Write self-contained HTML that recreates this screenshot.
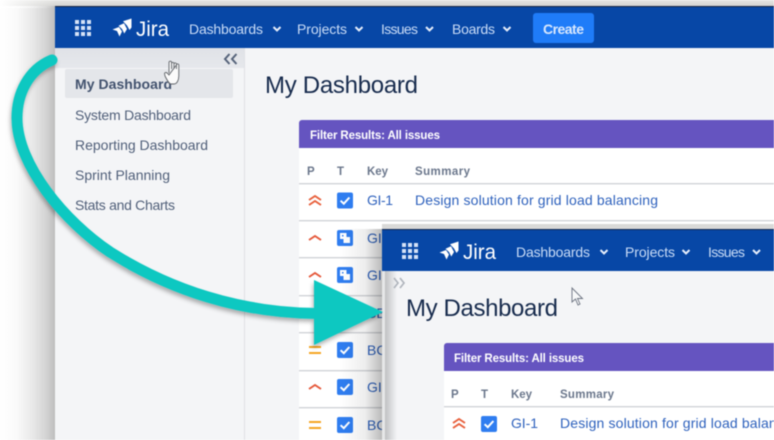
<!DOCTYPE html>
<html><head><meta charset="utf-8"><style>
html,body{margin:0;padding:0;background:#fff;width:774px;height:440px;overflow:hidden}
svg{display:block;filter:blur(.45px)}
text{font-family:"Liberation Sans",sans-serif;white-space:pre}
.nav{font-size:14px;fill:#c9dcf7}
.side{font-size:14px;fill:#505f79}
.hd{font-size:11.5px;font-weight:bold;fill:#6b778c}
.ft{font-size:11.5px;font-weight:bold;fill:#fff}
.lk{font-size:14px;fill:#2f62bd}
.ttl{font-size:24px;fill:#172b4d}
</style></head><body>
<svg width="774" height="440" viewBox="0 0 774 440" xmlns="http://www.w3.org/2000/svg">
<defs>
<linearGradient id="ls" x1="0" x2="1" y1="0" y2="0"><stop offset="0" stop-color="#fff"/><stop offset=".3" stop-color="#fafafa"/><stop offset=".6" stop-color="#e8e8e8"/><stop offset=".85" stop-color="#d2d2d2"/><stop offset="1" stop-color="#bdbdbd"/></linearGradient>
<linearGradient id="ts" x1="0" x2="0" y1="0" y2="1"><stop offset="0" stop-color="#e6e6e4"/><stop offset="1" stop-color="#d4d4d2"/></linearGradient>
<linearGradient id="tf" x1="0" x2="1" y1="0" y2="0"><stop offset="0" stop-color="#fff"/><stop offset="1" stop-color="#fff" stop-opacity="0"/></linearGradient>
<linearGradient id="band" x1="0" x2="0" y1="0" y2="1"><stop offset="0" stop-color="#e0e2e7"/><stop offset="1" stop-color="#e6e8ec"/></linearGradient>
<linearGradient id="os" x1="0" x2="1" y1="0" y2="0"><stop offset="0" stop-color="#000" stop-opacity="0"/><stop offset=".6" stop-color="#000" stop-opacity=".07"/><stop offset="1" stop-color="#000" stop-opacity=".27"/></linearGradient>
<linearGradient id="ins" x1="0" x2="1" y1="0" y2="0"><stop offset="0" stop-color="#bfc0c2"/><stop offset="1" stop-color="#f4f5f7"/></linearGradient>
<filter id="as" x="-20%" y="-20%" width="140%" height="140%"><feDropShadow dx="-1" dy="3" stdDeviation="2.2" flood-color="#000" flood-opacity=".3"/></filter>
<g id="chk"><rect width="16" height="16" rx="2" fill="#2f7df0"/><path d="M3.6 8.2 6.8 11.2 12.4 5" fill="none" stroke="#fff" stroke-width="2"/></g>
<g id="sty"><rect width="16" height="16" rx="2" fill="#2f7df0"/><rect x="3" y="3" width="6.500" height="6" fill="#fff"/><rect x="6.500" y="7" width="6.500" height="6" fill="#fff"/><rect x="5" y="5" width="1.500" height="1.500" fill="#2f7df0"/></g>
<path id="hi" d="M1 6 7 2 13 6" fill="none" stroke="#e5583a" stroke-width="1.9"/>
<g id="hh" fill="none" stroke="#e8603c" stroke-width="1.9"><path d="M1 5 7 1 13 5"/><path d="M1 10 7 6 13 10"/></g>
<g id="md" stroke="#f5a623" stroke-width="2"><path d="M1 1H13M1 7H13"/></g>
<g id="grid" fill="#d5e2f7"><rect x="0" y="0" width="4" height="4"/><rect x="6" y="0" width="4" height="4"/><rect x="12" y="0" width="4" height="4"/><rect x="0" y="6" width="4" height="4"/><rect x="6" y="6" width="4" height="4"/><rect x="12" y="6" width="4" height="4"/><rect x="0" y="12" width="4" height="4"/><rect x="6" y="12" width="4" height="4"/><rect x="12" y="12" width="4" height="4"/></g>
<g id="logo" fill="#fff"><path d="M19 0V9L17 11.500 14.500 7 10.500 2.800Z"/><path d="M11.500 4.800 14.500 10.500 11.800 15 9.500 10.500 6 7.300Z"/><path d="M6.500 8.500 9.500 13 7 18 4.500 12.500 0 11Z"/></g>
<path id="cv" d="M0 0 3.5 3.5 7 0" fill="none" stroke="#e6eefb" stroke-width="2"/>
</defs>

<rect width="774" height="440" fill="#fff"/>
<rect x="0" y="0" width="55" height="440" fill="url(#ls)"/>
<rect x="0" y="0" width="774" height="6" fill="url(#ts)"/>
<rect x="0" y="0" width="55" height="8" fill="url(#tf)"/>
<rect x="55" y="6" width="719" height="2" fill="#172440"/>
<rect x="55" y="7" width="719" height="41" fill="#0747a6"/>
<use href="#grid" x="75" y="20"/>
<use href="#logo" x="112.500" y="18.500"/>
<text x="136" y="36" font-size="21" fill="#fff" textLength="33" lengthAdjust="spacingAndGlyphs">Jira</text>
<text class="nav" x="189" y="34" textLength="74">Dashboards</text><use href="#cv" x="273.500" y="27"/>
<text class="nav" x="297" y="34" textLength="50">Projects</text><use href="#cv" x="355.500" y="27"/>
<text class="nav" x="381" y="34" textLength="37">Issues</text><use href="#cv" x="426" y="27"/>
<text class="nav" x="452" y="34" textLength="43">Boards</text><use href="#cv" x="503.500" y="27"/>
<rect x="533" y="13" width="61" height="30" rx="3" fill="#1f7cf8"/>
<text x="543" y="34" font-size="14" font-weight="bold" fill="#d9e8fd" textLength="41">Create</text>

<rect x="55" y="48" width="719" height="392" fill="#f4f5f7"/>
<rect x="55" y="48" width="189" height="20" fill="url(#band)"/>
<rect x="244" y="48" width="1" height="392" fill="#dfe1e5"/>
<path d="M229.500 54 225 59 229.500 64M236.500 54 232 59 236.500 64" fill="none" stroke="#56637a" stroke-width="2"/>
<rect x="65" y="69" width="168" height="29" rx="2" fill="#e4e6ea"/>
<text x="75" y="89" font-size="14" font-weight="bold" fill="#42526e" textLength="97">My Dashboard</text>
<text class="side" x="75" y="120" textLength="116">System Dashboard</text>
<text class="side" x="75" y="150" textLength="133">Reporting Dashboard</text>
<text class="side" x="75" y="180" textLength="95">Sprint Planning</text>
<text class="side" x="75" y="210" textLength="100">Stats and Charts</text>
<text class="ttl" x="265" y="93" textLength="153">My Dashboard</text>

<path d="M299 148V123a3 3 0 0 1 3-3H774V148Z" fill="#6554c0"/>
<rect x="299" y="148" width="475" height="292" fill="#fff"/>
<text class="ft" x="310" y="139" textLength="130">Filter Results: All issues</text>
<text class="hd" x="307" y="175">P</text><text class="hd" x="337" y="175">T</text><text class="hd" x="367" y="175" textLength="21">Key</text><text class="hd" x="415" y="175" textLength="55">Summary</text>
<g fill="#d2d4d8"><rect x="299" y="183" width="475" height="1.400"/><rect x="299" y="220" width="475" height="1.400"/><rect x="299" y="257" width="475" height="1.400"/><rect x="299" y="295" width="475" height="1.400"/><rect x="299" y="332" width="475" height="1.400"/><rect x="299" y="370" width="475" height="1.400"/><rect x="299" y="407" width="475" height="1.400"/></g>
<use href="#hh" x="308" y="195"/><use href="#chk" x="337" y="192.500"/>
<text class="lk" x="367" y="205" textLength="26">GI-1</text>
<text class="lk" x="415" y="205" textLength="243">Design solution for grid load balancing</text>
<use href="#hi" x="308" y="234"/><use href="#sty" x="337" y="230"/><text class="lk" x="367" y="243">GI</text>
<use href="#hi" x="308" y="271"/><use href="#sty" x="337" y="267"/><text class="lk" x="367" y="280">GI</text>
<use href="#sty" x="337" y="304"/><text class="lk" x="367" y="318">SE</text>
<use href="#md" x="308" y="346"/><use href="#chk" x="337" y="342"/><text class="lk" x="367" y="355">BC</text>
<use href="#hi" x="308" y="383"/><use href="#chk" x="337" y="379"/><text class="lk" x="367" y="392">GI</text>
<use href="#md" x="308" y="421"/><use href="#chk" x="337" y="417"/><text class="lk" x="367" y="430">BC</text>

<rect x="340" y="229" width="42" height="211" fill="url(#os)"/>
<rect x="382" y="224" width="392" height="5" fill="#d9d9d8"/>
<rect x="382" y="229" width="392" height="211" fill="#f4f5f7"/>
<rect x="382" y="271" width="3" height="169" fill="#e6e7e8"/>
<rect x="385" y="271" width="12" height="169" fill="url(#ins)"/>
<rect x="382" y="229" width="392" height="2" fill="#13294f"/>
<rect x="382" y="230" width="392" height="41" fill="#0747a6"/>
<use href="#grid" x="402" y="243"/>
<use href="#logo" x="439.500" y="241.500"/>
<text x="463" y="259" font-size="21" fill="#fff" textLength="33" lengthAdjust="spacingAndGlyphs">Jira</text>
<text class="nav" x="516" y="257" textLength="74">Dashboards</text><use href="#cv" x="600.500" y="250"/>
<text class="nav" x="625" y="257" textLength="50">Projects</text><use href="#cv" x="682.500" y="250"/>
<text class="nav" x="708" y="257" textLength="37">Issues</text><use href="#cv" x="753" y="250"/>
<path d="M394 278 398 283 394 288M400 278 404 283 400 288" fill="none" stroke="#b0b5bd" stroke-width="1.7"/>
<text class="ttl" x="406" y="316" textLength="152">My Dashboard</text>
<path d="M572 288V302L575.500 299 578 305 580 304 577.500 298.500 582.500 298.500Z" fill="#f7f8f9" stroke="#6b7280" stroke-width=".9"/>

<path d="M444 371V346a3 3 0 0 1 3-3H774V371Z" fill="#6554c0"/>
<rect x="444" y="371" width="330" height="69" fill="#fff"/>
<text class="ft" x="454" y="362" textLength="130">Filter Results: All issues</text>
<text class="hd" x="451" y="398">P</text><text class="hd" x="481" y="398">T</text><text class="hd" x="511" y="398" textLength="21">Key</text><text class="hd" x="560" y="398" textLength="54">Summary</text>
<rect x="444" y="406" width="330" height="1.400" fill="#d2d4d8"/>
<use href="#hh" x="452" y="418"/><use href="#chk" x="481" y="416"/>
<text class="lk" x="511" y="428" textLength="27">GI-1</text>
<text class="lk" x="560" y="428" textLength="243">Design solution for grid load balancing</text>

<g filter="url(#as)">
<path d="M52 60C28 70 17 94 17 118C17 165 65 222 110 252C170 290 240 313 318 313.500" fill="none" stroke="#0cc8c1" stroke-width="11" stroke-linecap="round"/>
<path d="M314 280 383 312 314 345Z" fill="#0cc8c1"/>
</g>

<path d="M169 73V62.500a1.300 1.300 0 0 1 2.600 0V69M171.600 63.500a1.200 1.200 0 0 1 2.400.3V69M174 64a1.200 1.200 0 0 1 2.400.3V69M176.400 65a1.200 1.200 0 0 1 2.400.3V76C178.800 80 177 84 174 84H171C169 84 167 80 165 76L164.500 73.500C165 72 167 72 169 75Z" fill="#fbfbfb" stroke="#5f6368" stroke-width=".9"/>
</svg>
</body></html>
